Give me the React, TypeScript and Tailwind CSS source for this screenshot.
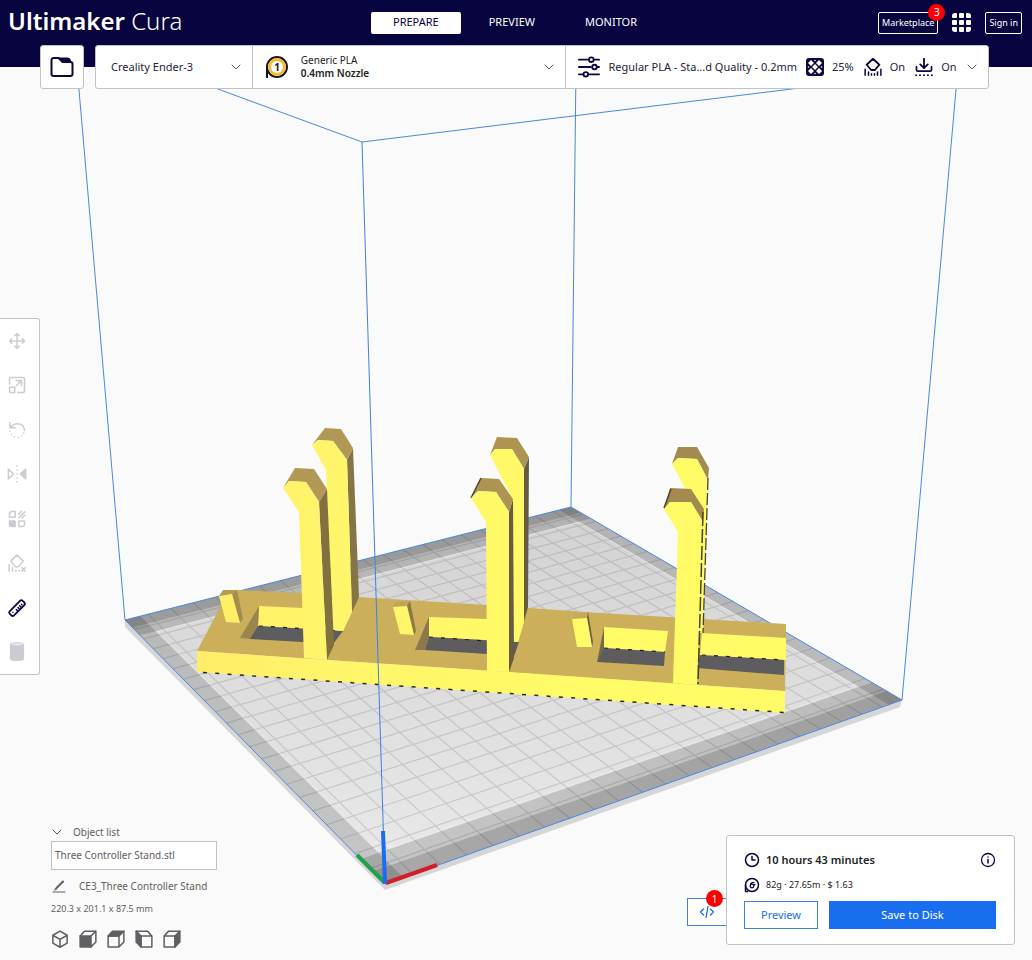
import React from "react";

type Pt = [number, number];

/* Corner pixels of the build plate: front, right, back, left */
const FRONT: Pt = [385, 884];
const RIGHT: Pt = [902, 700];
const BACK: Pt = [571, 507];
const LEFT: Pt = [125, 620];
const CELLS = 22;

/* Perspective map from the unit square to the plate */
function plate(u: number, v: number): Pt {
  const ax = RIGHT[0] - BACK[0];
  const ay = RIGHT[1] - BACK[1];
  const bx = LEFT[0] - BACK[0];
  const by = LEFT[1] - BACK[1];
  const cx = FRONT[0] - RIGHT[0] + BACK[0] - LEFT[0];
  const cy = FRONT[1] - RIGHT[1] + BACK[1] - LEFT[1];
  const det = ax * by - bx * ay;
  const g = (cx * by - bx * cy) / det;
  const h = (ax * cy - cx * ay) / det;
  const w = g * u + h * v + 1;
  const x = (RIGHT[0] - FRONT[0] + g * RIGHT[0]) * u + (LEFT[0] - FRONT[0] + h * LEFT[0]) * v + FRONT[0];
  const y = (RIGHT[1] - FRONT[1] + g * RIGHT[1]) * u + (LEFT[1] - FRONT[1] + h * LEFT[1]) * v + FRONT[1];
  return [x / w, y / w];
}

function area(u0: number, v0: number, u1: number, v1: number): string {
  return [plate(u0, v0), plate(u1, v0), plate(u1, v1), plate(u0, v1)]
    .map((p) => p[0].toFixed(1) + "," + p[1].toFixed(1))
    .join(" ");
}

function gridPath(): string {
  let d = "";
  for (let i = 1; i < CELLS; i++) {
    const t = i / CELLS;
    const [a, b, c, e] = [plate(t, 0), plate(t, 1), plate(0, t), plate(1, t)];
    d += `M${a[0].toFixed(1)} ${a[1].toFixed(1)}L${b[0].toFixed(1)} ${b[1].toFixed(1)}`;
    d += `M${c[0].toFixed(1)} ${c[1].toFixed(1)}L${e[0].toFixed(1)} ${e[1].toFixed(1)}`;
  }
  return d;
}

function Scene() {
  return (
    <svg className="absolute inset-0 h-full w-full" viewBox="0 0 1032 960" role="img" aria-label="Build plate with model">
      <defs>
        <linearGradient id="bed" x1="0" y1="507" x2="0" y2="884" gradientUnits="userSpaceOnUse">
          <stop offset="0" stopColor="#d2d2d2" />
          <stop offset="0.5" stopColor="#dedede" />
          <stop offset="1" stopColor="#eaeaea" />
        </linearGradient>
        <linearGradient id="lit" x1="197" y1="0" x2="600" y2="0" gradientUnits="userSpaceOnUse">
          <stop offset="0" stopColor="#ffed67" />
          <stop offset="0.35" stopColor="#fff56a" />
          <stop offset="1" stopColor="#fffb66" />
        </linearGradient>
      </defs>

      {/* Plate thickness and surface */}
      <polygon points="125,620 385,884 902,700 900,707 385,890 125,627" fill="#d6d6d6" />
      <polygon points={area(0, 0, 1, 1)} fill="url(#bed)" />
      <path d={gridPath()} fill="none" stroke="#808080" strokeOpacity="0.28" strokeWidth="1.2" />
      <g fill="#000" fillOpacity="0.15">
        <polygon points={area(0, 0, 1, 0.074)} />
        <polygon points={area(0, 0, 1, 0.037)} />
        <polygon points={area(0, 0.926, 1, 1)} />
        <polygon points={area(0, 0.963, 1, 1)} />
        <polygon points={area(0, 0, 0.03, 1)} />
        <polygon points={area(0.97, 0, 1, 1)} />
      </g>
      <polygon points={area(0.032, 0.077, 0.968, 0.923)} fill="none" stroke="#f2f2f2" strokeOpacity="0.5" strokeWidth="1" />

      {/* Build volume behind the model */}
      <g fill="none" stroke="#4a86e0" strokeWidth="1">
        <polygon points={area(0, 0, 1, 1)} />
        <path d="M125 620L77 67M571 507L576 67M902 700L958 67" />
        <path d="M362 142L158 67M362 142L970 67" />
      </g>

      {/* Base slab */}
      <polygon points="197,651 228,592 237,590 302,593 358,597 487,605 600,613 786,624 785,691" fill="#cbaf5b" />
      <polygon points="197,651 327,660 509,672 697,685 785,691 785,713 197,672" fill="url(#lit)" />
      <path d="M203 672.500L785 712.500" stroke="#2a2a20" strokeWidth="1.500" strokeDasharray="4 8.300" fill="none" />

      {/* Pockets */}
      <g>
        <polygon points="259,606 303,608 352,611 343,631 258,626" fill="url(#lit)" />
        <polygon points="259,606 258,626 252,639 240,638" fill="#9b854c" />
        <polygon points="258,626 343,631 333,644 303,642 250,639" fill="#5d5c5f" />
        <polygon points="429,617 487,619 524,622 518,642 429,637" fill="url(#lit)" />
        <polygon points="429,617 429,637 425,650 415,650" fill="#8c784a" />
        <polygon points="429,637 519,642 510,668 487,654 425,650" fill="#5d5c5f" />
        <polygon points="604,627 668,631 665,652 604,648" fill="url(#lit)" />
        <polygon points="604,627 604,648 602,662 597,662" fill="#776847" />
        <polygon points="604,648 665,652 664,666 598,662" fill="#5d5c5f" />
        <polygon points="702,633 786,638 786,660 700,655" fill="url(#lit)" />
        <polygon points="700,655 784,660 784,675 697,668" fill="#5d5c5f" />
        <path d="M259 626L343 631M429 637L487 641M604 648L665 652M702 655L785 660" stroke="#22221c" strokeDasharray="4 8" strokeWidth="1.200" />
      </g>

      {/* Pegs */}
      <g>
        <polygon points="219,596 223,590 237,590 232,594" fill="#b39a55" />
        <polygon points="232,594 237,590 243,619 240,623" fill="#a38c4e" />
        <polygon points="219,596 232,594 240,623 226,622" fill="url(#lit)" />
        <polygon points="393,607 396,602 410,601 407,606" fill="#bfa558" />
        <polygon points="407,606 410,601 416,631 414,635" fill="#8b7a48" />
        <polygon points="393,607 407,606 414,635 400,634" fill="url(#lit)" />
        <polygon points="572,619 575,614 588,612 587,618" fill="#c4a95a" />
        <polygon points="587,618 588,612 593,642 592,647" fill="#6e6242" />
        <polygon points="572,619 587,618 592,647 577,647" fill="url(#lit)" />
      </g>

      {/* Rear uprights */}
      <g>
        <polygon points="347,460 353,448 359,597 352,612" fill="#857546" />
        <polygon points="312,445 325,428 341,429 353,448 347,460 333,441 318,440" fill="#b29855" />
        <polygon points="312,445 318,440 333,441 347,460 352,612 343,631 333,630 326,470" fill="url(#lit)" />
        <polygon points="524,469 529,457 528,607 524,621" fill="#655b40" />
        <polygon points="490,455 497,437 517,438 529,457 524,469 512,449 495,449" fill="#ad9452" />
        <polygon points="490,455 495,449 512,449 524,469 524,621 518,642 513,641 513,500 504,482" fill="url(#lit)" />
        <polygon points="672,464 678,447 697,447 709,468 708,480 697,459 678,458" fill="#a38b50" />
        <polygon points="672,464 678,458 697,459 708,480 703,633 698,633 690,510 685,488" fill="url(#lit)" />
        <path d="M708 478L703 633" stroke="#4a432b" strokeWidth="1.300" strokeDasharray="12 3" />
      </g>

      {/* Front uprights */}
      <g>
        <polygon points="319,502 327,489 334,645 327,660" fill="#81713f" />
        <polygon points="283,488 295,468 314,469 327,489 319,502 306,482 289,481" fill="#b29855" />
        <polygon points="283,488 289,481 306,482 319,502 327,660 304,658 299,512" fill="url(#lit)" />
        <polygon points="509,512 513,499 514,658 509,672" fill="#655b40" />
        <polygon points="471,498 481,478 499,479 513,499 509,512 496,492 478,491" fill="#ad9452" />
        <path d="M471 498L481 478" stroke="#4c4530" strokeWidth="1.500" />
        <polygon points="471,498 478,491 496,492 509,512 509,672 487,671 486,522" fill="url(#lit)" />
        <polygon points="664,509 670,488 691,489 704,509 703,522 691,502 670,502" fill="#a38b50" />
        <path d="M664 508L671 489" stroke="#4c4530" strokeWidth="1.500" />
        <polygon points="664,509 670,502 691,502 703,522 697,685 673,683 678,532" fill="url(#lit)" />
        <path d="M703 512L698 684" stroke="#4a432b" strokeWidth="1.500" strokeDasharray="14 3" />
      </g>

      {/* Front edge of the volume and origin axes */}
      <path d="M362 142L385 884" stroke="#3f7fe6" strokeWidth="1" />
      <path d="M357 855L385 883" stroke="#1fa04c" strokeWidth="4" />
      <path d="M386 883L437 865" stroke="#cf2029" strokeWidth="4" />
      <path d="M383 831L385 884" stroke="#1a6cf0" strokeWidth="4" />
    </svg>
  );
}

function Icon({ className, children, box = "0 0 24 24" }: { className: string; children: React.ReactNode; box?: string }) {
  return (
    <svg className={className} viewBox={box} fill="none" stroke="currentColor" strokeWidth="2" strokeLinecap="round" strokeLinejoin="round" aria-hidden="true">
      {children}
    </svg>
  );
}

function Chevron() {
  return (
    <Icon className="h-3 w-3 shrink-0 text-[#555]" box="0 0 12 12">
      <path d="M2 4l4 4 4-4" strokeWidth="1" />
    </Icon>
  );
}

const tools: { label: string; active?: boolean; art: React.ReactNode }[] = [
  {
    label: "Move",
    art: <path d="M12 2v20M2 12h20M9 5l3-3 3 3M9 19l3 3 3-3M5 9l-3 3 3 3M19 9l3 3-3 3" />,
  },
  {
    label: "Scale",
    art: <path d="M2 11V4a2 2 0 0 1 2-2h16a2 2 0 0 1 2 2v16a2 2 0 0 1-2 2h-7M2 15h7v7H4a2 2 0 0 1-2-2zM11 13l7-7M11 6h7v7" />,
  },
  {
    label: "Rotate",
    art: (
      <>
        <path d="M2.500 2v7h7M3.500 8.500C6 5 9 3.500 13 3.500c5 0 9 4 9 9" />
        <path d="M21 16v.01M18 20v.01M13.500 22v.01M8.500 21v.01M4.500 18v.01M2.500 13.500v.01" strokeWidth="2.200" />
      </>
    ),
  },
  {
    label: "Mirror",
    art: (
      <>
        <path d="M0.500 5.500v13l7-6.500z" />
        <path d="M23.500 5.500v13l-7-6.500z" fill="currentColor" />
        <path d="M12 1.500v.01M12 6.500v.01M12 12v.01M12 17.500v.01M12 22.500v.01" strokeWidth="2.200" />
      </>
    ),
  },
  {
    label: "Per model settings",
    art: (
      <>
        <path d="M2 5a3 3 0 0 1 3-3h4.500v7.500H2zM14.500 14.500H22V19a3 3 0 0 1-3 3h-4.500z" />
        <path d="M2 14.500h7.500V22H5a3 3 0 0 1-3-3z" fill="currentColor" />
        <path d="M14 5.500L18 1.800M14.500 10l8-7.500M18.500 10.500L22.500 7" />
      </>
    ),
  },
  {
    label: "Support blocker",
    art: (
      <>
        <path d="M12 1.500L20.500 9.500 14 17h-4L3.500 9.500z" />
        <path d="M1.500 14v9M6 18v5M10.500 21.500v1.500M15 22v1M18.500 18l4.500 5M23 18l-4.500 5" />
      </>
    ),
  },
  {
    label: "Measure",
    active: true,
    art: (
      <>
        <path d="M2.200 16.500L16 2.400a2.500 2.500 0 0 1 3.500 0l2.200 2.200a2.500 2.500 0 0 1 0 3.500L8 21.800a2.500 2.500 0 0 1-3.500 0l-2.300-2.200a2.300 2.300 0 0 1 0-3.100z" strokeWidth="2.400" />
        <path d="M6.500 17.500v.01M11 14l1.500 1.500M13.500 11.500l1 1M15.500 9l1.800 1.500M18 7l.5.5" />
      </>
    ),
  },
  {
    label: "Cylinder",
    art: (
      <>
        <path d="M3.500 2.500v18c0 3.500 17 3.500 17 0v-18z" fill="currentColor" />
        <ellipse cx="12" cy="1.800" rx="8.500" ry="2.200" fill="#e9e9ee" strokeWidth="1.500" />
      </>
    ),
  },
];

const views: { label: string; art: React.ReactNode }[] = [
  { label: "3D view", art: <path d="M12 1.500L21.500 7v10.500L12 23l-9.500-5.500V7zM2.500 7L12 12.500 21.500 7M12 12.500V23" /> },
  {
    label: "Front view",
    art: (
      <>
        <path d="M1.500 8h14.500v14.500h-14.500z" fill="currentColor" />
        <path d="M1.500 8l6-6.500h15v14.500l-6.500 6.500M16 8l6.500-6.500" />
      </>
    ),
  },
  {
    label: "Top view",
    art: (
      <>
        <path d="M1.500 8l6-6.500h15l-6.500 6.500z" fill="currentColor" />
        <path d="M1.500 8h14.500v14.500h-14.500zM22.500 1.500v14.500l-6.500 6.500" />
      </>
    ),
  },
  {
    label: "Left view",
    art: (
      <>
        <path d="M1.500 1.500l6.500 6.500v14.500L1.500 16z" fill="currentColor" />
        <path d="M1.500 1.500h15l6 6.500v14.500h-14.500V8h14.500" />
      </>
    ),
  },
  {
    label: "Right view",
    art: (
      <>
        <path d="M22.500 1.500l-6.500 6.500v14.500l6.500-6.500z" fill="currentColor" />
        <path d="M1.500 8h14.500v14.500h-14.500zM1.500 8l6-6.500h15" />
      </>
    ),
  },
];

function SettingsBar() {
  return (
    <section className="relative -mt-[22px] mr-[43px] ml-10 flex gap-[11px] text-[11px] text-[#24243a]">
      <button aria-label="Open file" className="flex h-11 w-11 shrink-0 items-center justify-center rounded-[3px] border border-[#c2c2c6] bg-white text-[#0b0742]">
        <Icon className="h-6 w-6">
          <path d="M1.500 5a2 2 0 0 1 2-2h5l4 4h8a2 2 0 0 1 2 2v10a2 2 0 0 1-2 2h-17a2 2 0 0 1-2-2z" />
          <path d="M8.500 3h9a3 3 0 0 1 3 3v1h-8z" fill="currentColor" strokeWidth="1" />
        </Icon>
      </button>
      <div className="grid h-11 min-w-0 flex-1 grid-cols-[minmax(0,157fr)_minmax(0,314fr)_minmax(0,422fr)] divide-x divide-[#c2c2c6] rounded-[3px] border border-[#c2c2c6] bg-white">
        <button className="flex items-center justify-between pr-[10px] pl-[15px]">
          <span>Creality Ender-3</span>
          <Chevron />
        </button>
        <button className="flex items-center pr-[10px] pl-3 text-left">
          <svg className="mr-3 h-6 w-6 shrink-0" viewBox="0 0 24 24" aria-hidden="true">
            <path d="M2 12v11" stroke="#15151c" strokeWidth="2" />
            <circle cx="12" cy="12" r="10" fill="#fff" stroke="#15151c" strokeWidth="2" />
            <circle cx="12" cy="12" r="7.500" fill="#fff" stroke="#f7bd2c" strokeWidth="3" />
            <text x="12" y="15.500" textAnchor="middle" fontSize="10" fontWeight="700" fill="#15151c" fontFamily="Noto Sans, sans-serif">1</text>
          </svg>
          <span className="flex-1 text-[10px] leading-[13px] text-[#222]">
            <span className="block">Generic PLA</span>
            <b className="block font-semibold">0.4mm Nozzle</b>
          </span>
          <Chevron />
        </button>
        <button className="flex items-center pr-[10px] pl-3 whitespace-nowrap">
          <Icon className="mr-2 h-[22px] w-[22px] shrink-0 text-[#0b0742]">
            <path d="M1 4h10M18 4h5M1 12h13M21.500 12h1.500M1 20h4M12 20h11" />
            <circle cx="14.500" cy="4" r="2.500" />
            <circle cx="18" cy="12" r="2.500" />
            <circle cx="8.500" cy="20" r="2.500" />
          </Icon>
          <span>Regular PLA - Sta...d Quality - 0.2mm</span>
          <svg className="mr-2 ml-[9px] h-[18px] w-[18px] shrink-0" viewBox="0 0 18 18" aria-hidden="true">
            <rect width="18" height="18" rx="3" fill="#0b0742" />
            <g fill="#fff">
              <path d="M9 6l3 3-3 3-3-3z" />
              <path d="M5 2l3 3-3 3-3-3zM13 2l3 3-3 3-3-3zM5 10l3 3-3 3-3-3zM13 10l3 3-3 3-3-3z" />
              <circle cx="9" cy="2.500" r="0.800" />
              <circle cx="9" cy="15.500" r="0.800" />
              <circle cx="2.500" cy="9" r="0.800" />
              <circle cx="15.500" cy="9" r="0.800" />
            </g>
          </svg>
          <span>25%</span>
          <Icon className="mr-2 ml-[10px] h-[18px] w-[18px] shrink-0 text-[#0b0742]">
            <path d="M12 1l8.500 8-6 7h-5l-6-7z" strokeWidth="2.400" />
            <path d="M1.500 15v8M6 18.500V23M10 21v2M14 21v2M18 18.500V23M22.500 15v8" />
          </Icon>
          <span>On</span>
          <Icon className="mr-2 ml-[10px] h-[18px] w-[18px] shrink-0 text-[#0b0742]">
            <path d="M12 1v12M7 8.500l5 5 5-5M2 12v3.500a2 2 0 0 0 2 2h16a2 2 0 0 0 2-2V12" strokeWidth="2.400" />
            <path d="M1.500 23v.01M6.700 23v.01M12 23v.01M17.200 23v.01M22.500 23v.01" strokeWidth="2.600" />
          </Icon>
          <span>On</span>
          <span className="ml-auto">
            <Chevron />
          </span>
        </button>
      </div>
    </section>
  );
}

export default function App() {
  return (
    <div className="relative flex min-h-screen flex-col bg-[#fafafa] font-['Noto_Sans',sans-serif] text-[11px] text-[#222]">
      <Scene />

      <header className="relative h-[67px] bg-[#08043f] text-white">
        <div className="grid h-[45px] grid-cols-[1fr_auto_1fr] items-center pr-[10px] pl-2">
          <h1 className="pb-1 text-[24px] leading-none font-light whitespace-nowrap">
            <span className="font-semibold">Ultimaker</span> Cura
          </h1>
          <nav className="flex gap-[6px]">
            <button className="h-[22px] rounded-[2px] bg-white px-[22px] text-[#08043f]">PREPARE</button>
            <button className="h-[22px] px-[22px]">PREVIEW</button>
            <button className="h-[22px] px-[22px]">MONITOR</button>
          </nav>
          <div className="flex items-center justify-end gap-[14px] text-[9px]">
            <button className="relative h-[22px] rounded-[2px] border border-white px-[3px]">
              Marketplace
              <span className="absolute -top-[9px] -right-2 flex h-[17px] w-[17px] items-center justify-center rounded-full bg-[#ff0000] text-[10px] leading-none">
                3
              </span>
            </button>
            <button aria-label="Applications" className="grid grid-cols-3 gap-[2px]">
              {["rounded-tl-[3px]", "", "rounded-tr-[3px]", "", "", "", "rounded-bl-[3px]", "", "rounded-br-[3px]"].map((c, i) => (
                <i key={i} className={"h-[5px] w-[5px] rounded-[1px] bg-white " + c} />
              ))}
            </button>
            <button className="h-[22px] rounded-[2px] border border-white px-[3px]">Sign in</button>
          </div>
        </div>
      </header>

      <SettingsBar />

      <main className="relative flex flex-1 flex-col">
        <aside className="mt-[229px] flex h-[357px] w-10 flex-col items-center justify-between rounded-r-[3px] border border-l-0 border-[#c2c2c6] bg-white py-[6px] pr-[5px]">
          {tools.map((t) => (
            <button key={t.label} aria-label={t.label} className={"flex h-8 w-8 items-center justify-center " + (t.active ? "text-[#0b0742]" : "text-[#cbcbd2]")}>
              <Icon className="h-[18px] w-[18px] overflow-visible">{t.art}</Icon>
            </button>
          ))}
        </aside>

        <div className="mt-auto flex items-end justify-between pr-[17px] pb-3 pl-[51px]">
          <section className="text-[10px] text-[#5f5f63]">
            <button className="flex h-[18px] items-center gap-[10px]">
              <Chevron />
              Object list
            </button>
            <ul>
              <li>
                <button className="h-[29px] w-[166px] border border-[#c2c2c6] bg-white px-[3px] text-left">Three Controller Stand.stl</button>
              </li>
            </ul>
            <div className="mt-[6px] flex h-5 items-center gap-3">
              <button aria-label="Rename project" className="flex w-4 justify-center">
                <Icon className="h-[14px] w-[14px]" box="0 0 14 14">
                  <path d="M1 13h12" strokeWidth="1" />
                  <path d="M4.500 9L11 2.500" strokeWidth="2" />
                  <path d="M2.800 10.800l.8-1.600.8.8z" strokeWidth="1" />
                </Icon>
              </button>
              <span>CE3_Three Controller Stand</span>
            </div>
            <p className="mt-[3px] text-[9px] leading-5">220.3 x 201.1 x 87.5 mm</p>
            <div className="mt-[11px] flex gap-[10px]">
              {views.map((v) => (
                <button key={v.label} aria-label={v.label}>
                  <Icon className="h-[18px] w-[18px]">{v.art}</Icon>
                </button>
              ))}
            </div>
          </section>

          <section className="mb-[3px] flex items-end">
            <button aria-label="Developer messages" className="relative mb-[19px] flex h-7 w-[39px] items-center justify-center border border-r-0 border-[#3f7fd8] bg-white text-[#196ef0]">
              <Icon className="h-4 w-4" box="0 0 16 16">
                <path d="M4.500 5L1.500 8l3 3M11.500 5l3 3-3 3M9 2.500L7 13.500" strokeWidth="1.300" />
              </Icon>
              <span className="absolute -top-[9px] right-[3px] flex h-[17px] w-[17px] items-center justify-center rounded-full bg-[#ff0000] text-[10px] leading-none text-white">1</span>
            </button>
            <div className="w-[289px] rounded-[3px] border border-[#c2c2c6] bg-white pt-[14px] pr-[18px] pb-[15px] pl-[17px]">
              <div className="flex h-5 items-center gap-[6px]">
                <Icon className="h-4 w-4" box="0 0 16 16">
                  <circle cx="8" cy="8" r="6.500" stroke="#0b0742" strokeWidth="1.500" />
                  <path d="M8 4.500V8h3" stroke="#0b0742" strokeWidth="1.500" />
                </Icon>
                <b className="flex-1 font-semibold">10 hours 43 minutes</b>
                <button aria-label="Print details" className="text-[#0b0742]">
                  <Icon className="h-4 w-4" box="0 0 16 16">
                    <circle cx="8" cy="8" r="6.500" strokeWidth="1.300" />
                    <path d="M8 7.500v3.500M8 5v.01" strokeWidth="1.500" />
                  </Icon>
                </button>
              </div>
              <div className="mt-[5px] flex h-5 items-center gap-[6px] text-[9px]">
                <Icon className="h-4 w-4 text-[#0b0742]" box="0 0 16 16">
                  <path d="M1.500 8v6.500h2" strokeWidth="1.500" />
                  <circle cx="8" cy="8" r="6.500" strokeWidth="1.500" />
                  <circle cx="8" cy="9" r="1.800" strokeWidth="1.300" />
                  <path d="M6.500 8C6.500 6 8 5.300 10 5.300M9.800 8.300l1.200-1" strokeWidth="1.300" />
                </Icon>
                82g · 27.65m · $ 1.63
              </div>
              <div className="mt-[6px] flex gap-[11px]">
                <button className="h-7 w-[74px] border border-[#3f7fd8] bg-white text-[#196ef0]">Preview</button>
                <button className="h-7 flex-1 bg-[#196ef0] text-white">Save to Disk</button>
              </div>
            </div>
          </section>
        </div>
      </main>
    </div>
  );
}
